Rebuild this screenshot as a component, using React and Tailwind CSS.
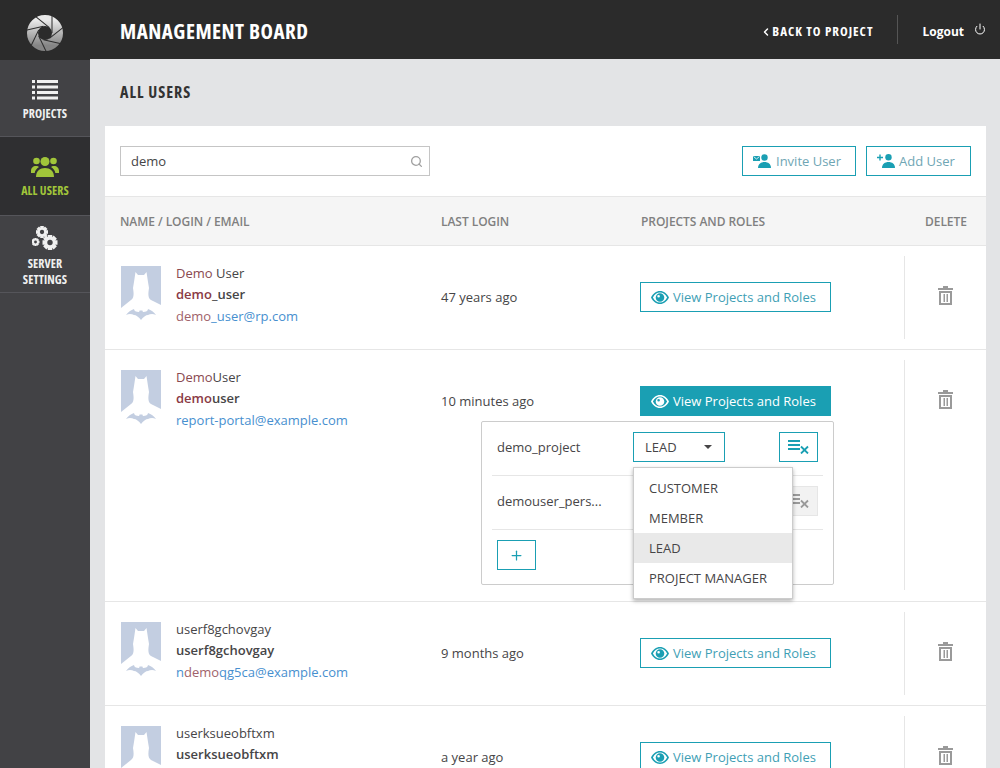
import { Power, Search, Plus, ChevronLeft } from "lucide-react";

const users = [
  { name: "Demo User", login: "demo_user", email: "demo_user@rp.com", last: "47 years ago" },
  { name: "DemoUser", login: "demouser", email: "report-portal@example.com", last: "10 minutes ago", open: true },
  { name: "userf8gchovgay", login: "userf8gchovgay", email: "ndemoqg5ca@example.com", last: "9 months ago" },
  { name: "userksueobftxm", login: "userksueobftxm", last: "a year ago" },
];

const condensed = "font-['Open_Sans'] [font-stretch:75%]";

function Logo() {
  const blades = [0, 51.4, 102.8, 154.2, 205.7, 257.1, 308.5];
  return (
    <svg width="36" height="36" viewBox="0 0 36 36">
      <defs>
        <linearGradient id="lg" x1="0" y1="0" x2="0" y2="1">
          <stop offset="0" stopColor="#e8e8e8" />
          <stop offset="1" stopColor="#858585" />
        </linearGradient>
      </defs>
      <circle cx="18" cy="18" r="12.500" fill="none" stroke="url(#lg)" strokeWidth="11" />
      {blades.map((a) => (
        <line key={a} x1="25" y1="18" x2="25" y2="1" stroke="#2b2b2b" strokeWidth="1" transform={`rotate(${a} 18 18)`} />
      ))}
    </svg>
  );
}

function ListIcon({ className }) {
  return (
    <svg width="26" height="20" viewBox="0 0 26 20" className={className} fill="currentColor">
      <rect x="0" y="0" width="3" height="3" />
      <rect x="5" y="0" width="21" height="3" />
      <rect x="0" y="5.500" width="3" height="3" />
      <rect x="5" y="5.500" width="21" height="3" />
      <rect x="0" y="11" width="3" height="3" />
      <rect x="5" y="11" width="21" height="3" />
      <rect x="0" y="16.500" width="3" height="3" />
      <rect x="5" y="16.500" width="21" height="3" />
    </svg>
  );
}

function UsersIcon() {
  return (
    <svg width="28" height="20" viewBox="0 0 28 20" fill="#a1c53a">
      <circle cx="14" cy="4.500" r="4.500" />
      <circle cx="5.500" cy="4" r="3.300" />
      <circle cx="22.500" cy="4" r="3.300" />
      <path d="M5 20c0-6 4-9 9-9s9 3 9 9z" />
      <path d="M0 14c0-3 2-5 5-5 1.500 0 2.500.5 3 1-2.500 1.500-4 3.500-4.300 6H0z" />
      <path d="M28 14c0-3-2-5-5-5-1.500 0-2.500.5-3 1 2.500 1.500 4 3.500 4.300 6H28z" />
    </svg>
  );
}

function Gear({ cx, cy, r }) {
  const teeth = [0, 45, 90, 135];
  return (
    <g>
      {teeth.map((a) => (
        <rect key={a} x={cx - r * 0.3} y={cy - r} width={r * 0.6} height={r * 2} transform={`rotate(${a} ${cx} ${cy})`} />
      ))}
      <circle cx={cx} cy={cy} r={r * 0.52} fill="none" stroke="currentColor" strokeWidth={r * 0.36} />
      <circle cx={cx} cy={cy} r={r * 0.36} fill="#424245" />
    </g>
  );
}

function GearsIcon() {
  return (
    <svg width="26" height="24" viewBox="0 0 26 24" fill="currentColor" className="text-[#f0f0f0]">
      <Gear cx="10" cy="6" r="6" />
      <Gear cx="3.500" cy="16" r="4" />
      <Gear cx="18" cy="16.500" r="7.500" />
    </svg>
  );
}

function EyeIcon() {
  return (
    <svg width="18" height="13" viewBox="0 0 18 13" fill="currentColor" className="shrink-0">
      <path fillRule="evenodd" d="M0 6.500C2 2.500 5.200 0 9 0s7 2.500 9 6.500C16 10.500 12.800 13 9 13S2 10.500 0 6.500zM1.900 6.500C3.600 9.700 6.100 11.500 9 11.500s5.400-1.800 7.100-5C14.400 3.300 11.900 1.500 9 1.500S3.600 3.300 1.900 6.500z" />
      <path fillRule="evenodd" d="M9 2.200a4.300 4.300 0 1 1 0 8.600 4.300 4.300 0 0 1 0-8.600zM7.600 4a1.300 1.300 0 1 0 0 2.600 1.300 1.300 0 0 0 0-2.600z" />
    </svg>
  );
}

function InviteIcon() {
  return (
    <svg width="18" height="14" viewBox="0 0 18 14" fill="#1a9fb3" className="shrink-0">
      <rect x="0" y="2" width="7" height="5" />
      <path d="M0.500 2.500L3.500 5 6.500 2.500" stroke="#fff" strokeWidth="0.8" fill="none" />
      <circle cx="11.500" cy="3.500" r="3.200" />
      <path d="M5 14c0-4 3-6 6.500-6s6.500 2 6.500 6z" />
    </svg>
  );
}

function AddUserIcon() {
  return (
    <svg width="18" height="14" viewBox="0 0 18 14" fill="#1a9fb3" className="shrink-0">
      <path d="M0 3.500h6M3 .5v6" stroke="#1a9fb3" strokeWidth="1.400" fill="none" />
      <circle cx="11.500" cy="3.300" r="3.200" />
      <path d="M5 14c0-4 3-6 6.500-6s6.500 2 6.500 6z" />
    </svg>
  );
}

function TrashIcon() {
  return (
    <svg width="15" height="19" viewBox="0 0 15 19" fill="#9a9a9a">
      <rect x="0" y="2" width="15" height="2" />
      <rect x="5" y="0" width="5" height="2" />
      <path fillRule="evenodd" d="M1 5h13v14H1zM3 7v10h9V7z" />
      <rect x="5.500" y="8" width="1.500" height="8" />
      <rect x="8.500" y="8" width="1.500" height="8" />
    </svg>
  );
}

function UnassignIcon({ color }) {
  return (
    <svg width="21" height="14" viewBox="0 0 21 14" fill={color}>
      <rect x="0" y="0" width="12" height="2" />
      <rect x="0" y="4" width="12" height="2" />
      <rect x="0" y="8" width="12" height="2" />
      <path d="M13 6.500l7 7M20 6.500l-7 7" stroke={color} strokeWidth="1.800" />
    </svg>
  );
}

function Avatar() {
  return (
    <svg width="40" height="54" viewBox="0 0 40 54" className="shrink-0">
      <path d="M0 0H40V39L30 34C27 32 27 28 28 22L27 16 25.500 6 23 9H17L14.500 6 13 16 12 22C13 28 13 32 10 34L0 42Z" fill="#c3cee1" />
      <path d="M5 49C7 46 10 44 13 43 13 45 15 46 18 46L19 44 20 45 21 44 22 46C25 46 27 45 27 43 30 44 33 46 35 49 32 47.500 29 48 27 49 25 49 22 51 20 54 18 51 15 49 13 49 11 48 8 47.500 5 49Z" fill="#c3cee1" />
    </svg>
  );
}

function Highlight({ text, className }) {
  const i = text.toLowerCase().indexOf("demo");
  if (i < 0) return <span>{text}</span>;
  return (
    <span>
      {text.slice(0, i)}
      <span className={className}>{text.slice(i, i + 4)}</span>
      {text.slice(i + 4)}
    </span>
  );
}

function ProjectsPanel() {
  return (
    <div className="absolute left-[-159px] top-[61px] w-[353px] h-[164px] bg-white border border-[#cccccc] rounded-[2px] z-10 px-[10px] text-[13px] text-[#464547]">
      <div className="h-[54px] flex items-center border-b border-[#e6e6e6] pl-[5px] pb-[4px]">
        <span className="w-[136px] mt-[2px]">demo_project</span>
        <div className="w-[92px] h-[30px] border border-[#1a9fb3] flex items-center justify-between pl-[11px] pr-[12px]">
          <span className="pt-[2px]">LEAD</span>
          <span className="w-0 h-0 border-x-[4px] border-x-transparent border-t-[4px] border-t-[#464547]" />
        </div>
        <div className="ml-[54px] w-[39px] h-[30px] border border-[#1a9fb3] flex items-center justify-center">
          <UnassignIcon color="#1a9fb3" />
        </div>
      </div>
      <div className="h-[54px] flex items-center border-b border-[#e6e6e6] pl-[5px] pb-[4px]">
        <span className="w-[136px] mt-[3px]">demouser_pers...</span>
        <div className="w-[92px] h-[30px] border border-[#cccccc] bg-[#f5f5f5]" />
        <div className="ml-[54px] w-[39px] h-[30px] border border-[#e6e6e6] bg-[#f2f2f2] flex items-center justify-center">
          <UnassignIcon color="#9a9a9a" />
        </div>
      </div>
      <div className="h-[54px] flex items-center pl-[5px] pb-[4px]">
        <div className="w-[39px] h-[30px] border border-[#1a9fb3] flex items-center justify-center">
          <Plus size={15} color="#1a9fb3" />
        </div>
      </div>
      <div className="absolute left-[151px] top-[45px] w-[160px] bg-white border border-[#cccccc] shadow-[0_2px_4px_rgba(0,0,0,0.3)] py-[5px]">
        {["CUSTOMER", "MEMBER", "LEAD", "PROJECT MANAGER"].map((r) => (
          <div key={r} className={`h-[30px] flex items-center pl-[15px] pt-[1px] ${r === "LEAD" ? "bg-[#e9e9e9]" : ""}`}>
            {r}
          </div>
        ))}
      </div>
    </div>
  );
}

function UserRow({ user }) {
  return (
    <div className={`flex border-b border-[#e6e6e6] pt-[10px] ${user.open ? "h-[252px]" : "h-[104px]"}`}>
      <div className="w-[336px] flex pl-[16px] pt-[10px]">
        <Avatar />
        <div className="ml-[15px] text-[13px] leading-[21.500px] mt-[-3.400px]">
          <div className="text-[#464547]"><Highlight text={user.name} className="text-[#8a4a50]" /></div>
          <div className="font-semibold text-[#464547]"><Highlight text={user.login} className="text-[#8a3a45]" /></div>
          {user.email && <div className="text-[#478fcf]"><Highlight text={user.email} className="text-[#a0626a]" /></div>}
        </div>
      </div>
      <div className="w-[199px] pt-[26px] text-[13px] leading-[30px] text-[#464547]">
        {user.last}
      </div>
      <div className="w-[264px] relative">
        <div className={`absolute left-0 top-[26px] w-[191px] h-[30px] flex items-center pl-[10px] gap-[4px] text-[13px] border border-[#1a9fb3] ${user.open ? "bg-[#1a9fb3] text-white" : "text-[#1a9fb3]"}`}>
          <EyeIcon />
          <span className={`pt-[1px] ${user.open ? "" : "text-[#3f9fb5]"}`}>View Projects and Roles</span>
        </div>
        {user.open && <ProjectsPanel />}
      </div>
      <div className={`w-[82px] border-l border-[#e6e6e6] flex justify-center pt-[30px] ${user.open ? "h-[230px]" : "h-[83px]"}`}>
        <TrashIcon />
      </div>
    </div>
  );
}

function NavItem({ label, icon, active, h }) {
  return (
    <div className={`flex flex-col items-center justify-center border-b border-[#55555a] ${h} ${active ? "bg-[#2f2f31] text-[#a1c53a] pt-[4px]" : "bg-[#424245] text-[#f0f0f0] pt-[6px]"}`}>
      {icon}
      <div className={`${condensed} font-bold text-[12px] leading-[16px] tracking-[0.1px] text-center mt-[6px] whitespace-pre-line`}>{label}</div>
    </div>
  );
}

export default function App() {
  return (
    <div className="w-[1000px] h-[768px] overflow-hidden flex font-['Open_Sans',sans-serif] bg-[#e3e4e6]">
      <div className="w-[90px] shrink-0 bg-[#424245] flex flex-col">
        <div className="h-[60px] bg-[#2b2b2b] flex items-center justify-center pt-[6px]"><Logo /></div>
        <NavItem h="h-[77px]" label="PROJECTS" icon={<ListIcon className="text-[#f0f0f0]" />} />
        <NavItem h="h-[79px]" label="ALL USERS" active icon={<UsersIcon />} />
        <NavItem h="h-[77px]" label={"SERVER\nSETTINGS"} icon={<GearsIcon />} />
      </div>
      <div className="flex-1 flex flex-col min-w-0">
        <div className="h-[59px] shrink-0 bg-[#2b2b2b] flex items-center pl-[30px] pr-[14px] text-white">
          <div className={`${condensed} font-bold text-[21px] tracking-[0.5px] pt-[4px]`}>MANAGEMENT BOARD</div>
          <div className={`${condensed} font-bold text-[13px] tracking-[1px] ml-auto flex items-center pt-[4px]`}>
            <ChevronLeft size={12} strokeWidth={3} />
            BACK TO PROJECT
          </div>
          <div className="w-px h-[29px] bg-[#555555] mx-[24px] mt-[-1px]" />
          <div className="font-bold text-[12px] flex items-center gap-[10px] pt-[4px]">
            Logout
            <Power size={12} strokeWidth={2} className="mt-[-5px]" />
          </div>
        </div>
        <div className={`h-[67px] shrink-0 flex items-center pl-[30px] pb-[2px] ${condensed} font-bold text-[16px] tracking-[1px] text-[#333333]`}>
          ALL USERS
        </div>
        <div className="ml-[15px] w-[881px] bg-white flex-1 min-h-0 overflow-hidden">
          <div className="h-[71px] flex items-center px-[15px] border-b border-[#e6e6e6]">
            <div className="w-[310px] h-[30px] border border-[#c5c5c5] flex items-center pl-[10px] pr-[6px] text-[13px] text-[#464547]">
              <span className="pt-[1px]">demo</span>
              <Search size={13} strokeWidth={2.400} className="ml-auto text-[#a0a0a0]" />
            </div>
            <div className="ml-auto flex gap-[10px] text-[13px] text-[#6fa6b4]">
              <div className="w-[114px] h-[30px] border border-[#1a9fb3] flex items-center pl-[10px] gap-[5px]"><InviteIcon /><span className="pt-[1px]">Invite User</span></div>
              <div className="w-[105px] h-[30px] border border-[#1a9fb3] flex items-center pl-[10px] gap-[4px]"><AddUserIcon /><span className="pt-[1px]">Add User</span></div>
            </div>
          </div>
          <div className="h-[49px] bg-[#f5f5f5] flex items-center border-b border-[#e6e6e6] text-[12px] font-semibold tracking-[-0.05px] text-[#808080]">
            <div className="w-[336px] pl-[15px] pt-[1px]">NAME / LOGIN / EMAIL</div>
            <div className="w-[200px] pt-[1px]">LAST LOGIN</div>
            <div className="w-[284px] pt-[1px]">PROJECTS AND ROLES</div>
            <div className="pt-[1px]">DELETE</div>
          </div>
          {users.map((u) => (
            <UserRow key={u.login} user={u} />
          ))}
        </div>
      </div>
    </div>
  );
}
